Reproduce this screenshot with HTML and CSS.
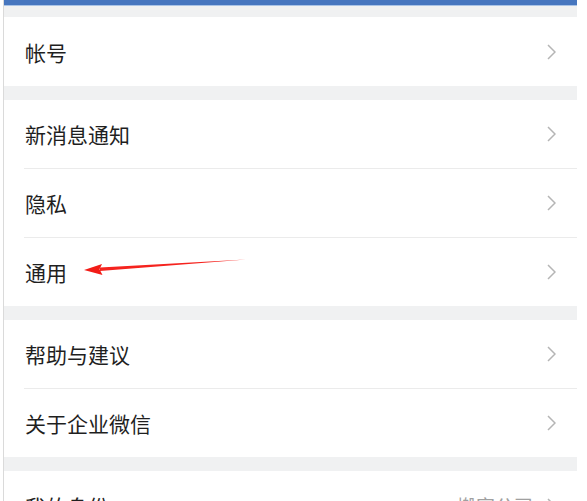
FILE: index.html
```html
<!DOCTYPE html>
<html lang="zh-CN">
<head>
<meta charset="utf-8">
<link rel="stylesheet" href="styles.css">
</head>
<body>
<div class="page">
  <div class="topbar"></div>
  <div class="gap first"></div>
  <div class="group">
    <div class="row"><span class="label">帐号</span><span class="chev"><svg width="9" height="16" viewBox="0 0 9 16"><path d="M1 1 L8 8 L1 15" fill="none" stroke="#b5b5b5" stroke-width="1.5"/></svg></span></div>
  </div>
  <div class="gap"></div>
  <div class="group">
    <div class="row"><span class="label">新消息通知</span><span class="chev"><svg width="9" height="16" viewBox="0 0 9 16"><path d="M1 1 L8 8 L1 15" fill="none" stroke="#b5b5b5" stroke-width="1.5"/></svg></span></div>
    <div class="row"><span class="label">隐私</span><span class="chev"><svg width="9" height="16" viewBox="0 0 9 16"><path d="M1 1 L8 8 L1 15" fill="none" stroke="#b5b5b5" stroke-width="1.5"/></svg></span></div>
    <div class="row"><span class="label">通用</span><span class="chev"><svg width="9" height="16" viewBox="0 0 9 16"><path d="M1 1 L8 8 L1 15" fill="none" stroke="#b5b5b5" stroke-width="1.5"/></svg></span></div>
  </div>
  <div class="gap"></div>
  <div class="group">
    <div class="row"><span class="label">帮助与建议</span><span class="chev"><svg width="9" height="16" viewBox="0 0 9 16"><path d="M1 1 L8 8 L1 15" fill="none" stroke="#b5b5b5" stroke-width="1.5"/></svg></span></div>
    <div class="row"><span class="label">关于企业微信</span><span class="chev"><svg width="9" height="16" viewBox="0 0 9 16"><path d="M1 1 L8 8 L1 15" fill="none" stroke="#b5b5b5" stroke-width="1.5"/></svg></span></div>
  </div>
  <div class="gap"></div>
  <div class="group">
    <div class="row"><span class="label">我的身份</span><span class="value">搬家公司</span><span class="chev"><svg width="9" height="16" viewBox="0 0 9 16"><path d="M1 1 L8 8 L1 15" fill="none" stroke="#b5b5b5" stroke-width="1.5"/></svg></span></div>
  </div>
  <svg class="arrow" width="587" height="501" viewBox="0 0 587 501">
    <path d="M246 259.6 L100 267.6 L100 271 Z" fill="#f5231e"/>
    <path d="M84 270 L102 264 L99.5 269.3 L102.5 275 Z" fill="#f21c17"/>
  </svg>
</div>
</body>
</html>
```
FILE: styles.css
```css
html, body {
  margin: 0;
  padding: 0;
  background: #ffffff;
  height: 501px;
  overflow: hidden;
}
.page {
  position: relative;
  margin-left: 3px;
  width: 573px;
  border-left: 1px solid #dadada;
  font-family: "Noto Sans CJK SC", "Noto Sans", sans-serif;
  min-height: 600px;
}
.topbar {
  height: 5px;
  background: #4676bf;
  border-bottom: 1px solid #a9c3e6;
}
.gap {
  height: 14px;
  background: #f0f1f2;
}
.gap.first {
  height: 11px;
}
.group {
  background: #ffffff;
  padding-left: 20px;
}
.row {
  height: 69px;
  display: flex;
  align-items: center;
  padding-right: 20px;
  border-bottom: 1px solid #ebebeb;
  box-sizing: border-box;
}
.row:last-child {
  border-bottom: none;
  height: 68px;
}
.group .row:first-child:last-child {
  height: 69px;
}
.label {
  flex: 1;
  font-size: 21px;
  color: #1f1f1f;
  padding-left: 1px;
}
.value {
  font-size: 19px;
  color: #a0a0a0;
  margin-right: 14px;
}
.chev {
  display: flex;
  align-items: center;
  width: 10px;
}
.arrow {
  position: absolute;
  left: -4px;
  top: 0;
  pointer-events: none;
}
```
